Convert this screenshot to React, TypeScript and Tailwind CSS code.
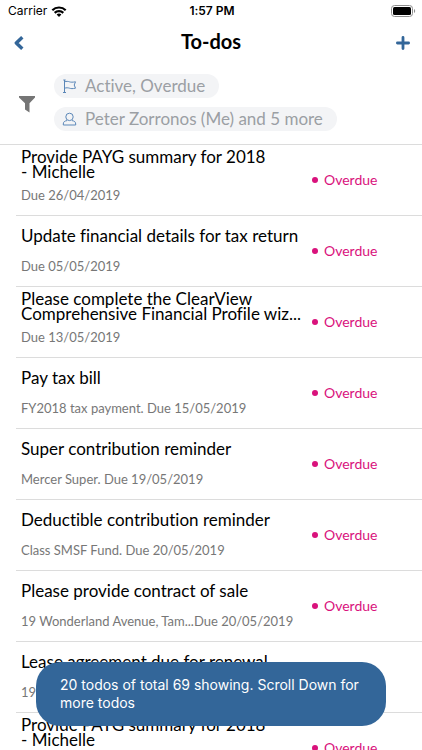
import { ReactNode } from "react";

type Todo = {
  id: number;
  title: string;
  detail?: string;
  due: string;
};

const todos: Todo[] = [
  { id: 1, title: "Provide PAYG summary for 2018\n- Michelle", due: "Due 26/04/2019" },
  { id: 2, title: "Update financial details for tax return", due: "Due 05/05/2019" },
  {
    id: 3,
    title: "Please complete the ClearView\nComprehensive Financial Profile wiz...",
    due: "Due 13/05/2019",
  },
  { id: 4, title: "Pay tax bill", detail: "FY2018 tax payment. ", due: "Due 15/05/2019" },
  { id: 5, title: "Super contribution reminder", detail: "Mercer Super. ", due: "Due 19/05/2019" },
  { id: 6, title: "Deductible contribution reminder", detail: "Class SMSF Fund. ", due: "Due 20/05/2019" },
  {
    id: 7,
    title: "Please provide contract of sale",
    detail: "19 Wonderland Avenue, Tam...",
    due: "Due 20/05/2019",
  },
  {
    id: 8,
    title: "Lease agreement due for renewal",
    detail: "19 Wonderland Avenue, Tam...",
    due: "Due 20/05/2019",
  },
  { id: 9, title: "Provide PAYG summary for 2018\n- Michelle", due: "Due 26/04/2019" },
];

const StatusBar = () => (
  <div className="grid h-[22px] grid-cols-3 items-center pr-1.5 pl-2 font-['Inter',sans-serif] text-xs text-black">
    <div className="flex items-center gap-1">
      <span>Carrier</span>
      <svg width="16" height="11" viewBox="0 0 15 11" aria-hidden="true">
        <g fill="none" stroke="#000" strokeWidth="2.2">
          <path d="M0.8 4.200a9.600 9.600 0 0 1 13.400 0" />
          <path d="M3.200 6.900a6.100 6.100 0 0 1 8.600 0" />
        </g>
        <path d="M7.5 11 5.100 8.600a3.400 3.400 0 0 1 4.800 0z" />
      </svg>
    </div>
    <span className="text-center font-semibold">1:57 PM</span>
    <svg className="justify-self-end" width="25" height="12" viewBox="0 0 25 12" aria-hidden="true">
      <rect x="0.5" y="0.5" width="21" height="11" rx="3" fill="none" stroke="#8e8e8e" />
      <rect x="2" y="2" width="18" height="8" rx="1.5" />
      <path d="M23 4v4c1.6-.6 1.6-3.4 0-4z" fill="#8e8e8e" />
    </svg>
  </div>
);

const NavBar = () => (
  <header className="grid h-[42px] grid-cols-3 items-center px-3">
    <button type="button" aria-label="Back" className="w-6">
      <svg width="14" height="14" viewBox="0 0 14 14" fill="none" stroke="#336699" strokeWidth="3.4">
        <path d="M10.300 1.200 4.300 7l6 5.800" strokeLinejoin="round" />
      </svg>
    </button>
    <h1 className="pb-1 text-center text-xl font-bold text-black">To-dos</h1>
    <button type="button" aria-label="Add to-do" className="justify-self-end">
      <svg width="14" height="14" viewBox="0 0 14 14" stroke="#336699" strokeWidth="2.8" strokeLinecap="round">
        <path d="M7 1.400v11.200M1.400 7h11.200" />
      </svg>
    </button>
  </header>
);

const FilterChip = ({ icon, children }: { icon: ReactNode; children: ReactNode }) => (
  <button
    type="button"
    className="flex h-6 items-center gap-2 rounded-full bg-[#f3f4f6] pr-3.5 pl-2 text-[17px] whitespace-nowrap text-[#9b9fa4]"
  >
    {icon}
    <span>{children}</span>
  </button>
);

const FlagIcon = () => (
  <svg width="15" height="14" viewBox="0 0 15 14" fill="none" stroke="#5b87b8" strokeLinejoin="round" aria-hidden="true">
    <path d="M2.500 1v12.500M1 13.500h3M1.300 1h2.400" />
    <path d="M2.500 2.800c2-.6 3.600-.5 5 0s3 .5 6 0l-1.300 3.200 1.300 3.200c-3 .6-4.500.5-6 0s-3-.6-5 0" />
  </svg>
);

const PersonIcon = () => (
  <svg width="15" height="14" viewBox="0 0 15 14" fill="none" stroke="#5b87b8" strokeLinejoin="round" aria-hidden="true">
    <circle cx="7.5" cy="4.900" r="3.700" />
    <path d="M5 8.600C2.600 8.900 1.300 10 1.300 12v1h12.400v-1c0-2-1.300-3.100-3.700-3.400" />
  </svg>
);

const Filters = () => (
  <div className="flex h-[81px] items-center gap-[18px] border-b border-[#dcdcdc] pb-1 pl-[18px]">
    <button type="button" aria-label="Filter" className="pt-1">
      <svg width="18" height="18" viewBox="0 0 18 18" fill="#757575">
        <path d="M1 1h16v1.600l-5.500 5.600V17.500l-4.500-2.900V8.200L1 2.600z" />
      </svg>
    </button>
    <div className="flex flex-col items-start gap-[9px]">
      <FilterChip icon={<FlagIcon />}>Active, Overdue</FilterChip>
      <FilterChip icon={<PersonIcon />}>Peter Zorronos (Me) and 5 more</FilterChip>
    </div>
  </div>
);

const TodoItem = ({ todo }: { todo: Todo }) => (
  <li className="flex h-[71px] items-center border-b border-[#dcdcdc] pl-[5px]">
    <div className="min-w-0 flex-1 pb-2.5">
      <div className="flex h-9 items-center">
        <h2 className="text-[17px] leading-[15px] whitespace-pre text-black">{todo.title}</h2>
      </div>
      <p className="mt-1 text-[13px] leading-[18px] whitespace-nowrap text-[#777777]">
        {todo.detail}
        {todo.due}
      </p>
    </div>
    <div className="flex w-[110px] shrink-0 items-center gap-1.5 text-sm text-[#d9127c]">
      <span className="size-1.5 rounded-full bg-[#d9127c]" />
      <span>Overdue</span>
    </div>
  </li>
);

export default function App() {
  return (
    <div className="relative flex h-screen flex-col overflow-hidden bg-white font-['Lato',sans-serif] [font-variant-ligatures:none]">
      <StatusBar />
      <NavBar />
      <Filters />
      <ul className="min-h-0 flex-1 overflow-hidden pl-4">
        {todos.map((todo) => (
          <TodoItem key={todo.id} todo={todo} />
        ))}
      </ul>
      <div
        role="status"
        className="absolute inset-x-9 bottom-6 rounded-3xl bg-[#336699] px-6 py-3.5 font-['Inter',sans-serif] text-sm leading-[18px] text-white"
      >
        20 todos of total 69 showing. Scroll Down for more todos
      </div>
    </div>
  );
}
